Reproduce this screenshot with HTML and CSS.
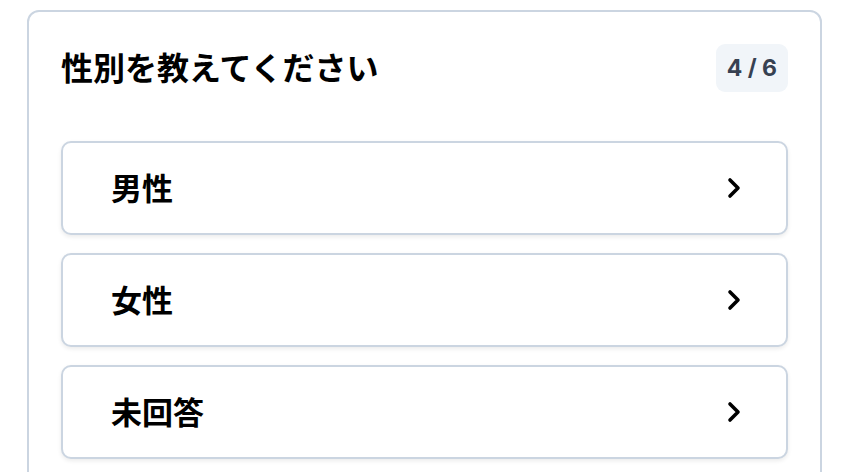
FILE: index.html
```html
<!DOCTYPE html>
<html lang="ja">
<head>
 <meta charset="UTF-8">
 <meta name="viewport" content="width=device-width, initial-scale=1.0">
 <title>性別を教えてください</title>
 <link rel="stylesheet" href="styles.css">
</head>
<body>
<div class="page">
 <div class="question-card">
   <div class="question-head">
     <h2>性別を教えてください</h2>
     <span class="step">4 / 6</span>
   </div>
   <div class="options">
     <button class="option">
       <span>男性</span>
       <svg class="chevron" viewBox="0 0 14 22" width="14" height="22"><path d="M3 3l8 8-8 8"/></svg>
     </button>
     <button class="option">
       <span>女性</span>
       <svg class="chevron" viewBox="0 0 14 22" width="14" height="22"><path d="M3 3l8 8-8 8"/></svg>
     </button>
     <button class="option">
       <span>未回答</span>
       <svg class="chevron" viewBox="0 0 14 22" width="14" height="22"><path d="M3 3l8 8-8 8"/></svg>
     </button>
   </div>
 </div>
</div>
</body>
</html>
```

FILE: styles.css
```css
body {
  font-family: "Noto Sans CJK JP", "Noto Sans", sans-serif;
  background-color: #ffffff;
  margin: 0;
  padding: 0;
  color: #000;
}
.page {
  padding: 10px 22px 0 27px;
}
.question-card {
  border: 2px solid #cbd5e1;
  border-radius: 12px;
  padding: 32px 32px 40px 32px;
  min-height: 600px;
}
.question-head {
  display: flex;
  align-items: center;
  justify-content: space-between;
  margin-bottom: 49px;
}
.question-head h2 {
  margin: 0 0 4px 0;
  font-size: 32px;
  font-weight: 700;
  line-height: 44px;
}
.step {
  background-color: #f1f5f9;
  color: #374151;
  font-family: Inter, "Noto Sans", sans-serif;
  font-weight: 700;
  font-size: 23px;
  border-radius: 9px;
  padding: 0 11px;
  height: 48px;
  line-height: 48px;
}
.options {
  display: flex;
  flex-direction: column;
  gap: 18px;
}
.option {
  display: flex;
  align-items: center;
  justify-content: space-between;
  height: 94px;
  padding: 0 45px 0 48px;
  background-color: #ffffff;
  border: 2px solid #cbd5e1;
  border-radius: 10px;
  box-shadow: 0 2px 4px rgba(0, 0, 0, 0.08);
  font-family: inherit;
  font-size: 31px;
  font-weight: 700;
  line-height: 40px;
  color: #000;
  cursor: pointer;
  text-align: left;
}
.option span {
  margin-bottom: 3px;
}
.chevron {
  fill: none;
  stroke: #000;
  stroke-width: 3.6;
  stroke-linecap: round;
  stroke-linejoin: round;
}
```
